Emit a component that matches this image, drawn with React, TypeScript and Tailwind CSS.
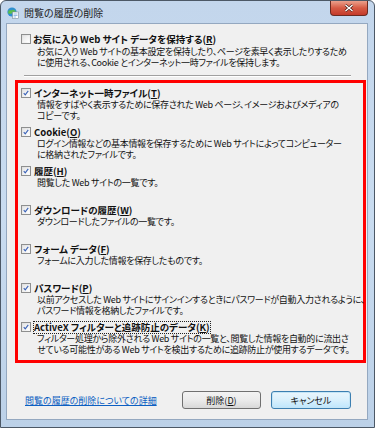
import React from 'react';

const items = [
  { label: 'インターネット一時ファイル', key: 'T', lines: ['情報をすばやく表示するために保存された Web ページ、イメージおよびメディアの', 'コピーです。'] },
  { label: 'Cookie', key: 'O', lines: ['ログイン情報などの基本情報を保存するために Web サイトによってコンピューター', 'に格納されたファイルです。'] },
  { label: '履歴', key: 'H', lines: ['閲覧した Web サイトの一覧です。'] },
  { label: 'ダウンロードの履歴', key: 'W', lines: ['ダウンロードしたファイルの一覧です。'] },
  { label: 'フォーム データ', key: 'F', lines: ['フォームに入力した情報を保存したものです。'] },
  { label: 'パスワード', key: 'P', lines: ['以前アクセスした Web サイトにサインインするときにパスワードが自動入力されるように、', 'パスワード情報を格納したファイルです。'] },
  { label: 'ActiveX フィルターと追跡防止のデータ', key: 'K', lines: ['フィルター処理から除外される Web サイトの一覧と、閲覧した情報を自動的に流出さ', 'せている可能性がある Web サイトを検出するために追跡防止が使用するデータです。'], focus: true },
];

function Checkbox({ checked }: { checked: boolean }) {
  return (
    <div className="w-[10px] h-[10px] shrink-0 border border-[#8e8f8f] bg-gradient-to-br from-[#dedede] to-[#fbfbfb] p-px">
      <div className="w-full h-full bg-gradient-to-br from-[#e6e6e6] to-[#ffffff] flex items-center justify-center">
        {checked && (
          <svg viewBox="0 0 8 8" className="w-[8px] h-[8px]">
            <path d="M1 4.2 L3 6.4 L7 1.2" fill="none" stroke="#3a62b8" strokeWidth="1.5" />
          </svg>
        )}
      </div>
    </div>
  );
}

function TitleIcon() {
  return (
    <svg viewBox="0 0 12 12" className="w-[12px] h-[12px]">
      <circle cx="5" cy="5" r="4.6" fill="#2f8fd0" />
      <path d="M1.5 3.5 C3 2.5 4 4 5.5 3 C6.5 2.3 7 3.5 8.5 3.6 L8.5 6 C7 6.4 6 5 4.6 6.4 C3.6 7.4 2.4 6.2 1 6.6 Z" fill="#5bbf4a" />
      <rect x="5.5" y="5" width="6" height="6.5" fill="#ffffff" stroke="#7a8a9a" strokeWidth="0.6" />
      <path d="M6.5 7 H10.5 M6.5 8.5 H10.5 M6.5 10 H9" stroke="#6ea0d8" strokeWidth="0.7" />
    </svg>
  );
}

export default function App() {
  return (
    <div className="w-[375px] h-[428px] overflow-hidden flex flex-col border border-[#4c5866] rounded-t-[6px] bg-gradient-to-b from-[#c3d6ec] via-[#c9dcf0] to-[#bcd1e8] text-[#111] [font-family:'Noto_Sans_CJK_JP','Noto_Sans',sans-serif] [font-feature-settings:'palt']">
      {/* Title bar */}
      <div className="h-[22px] flex items-start shrink-0">
        <div className="pl-[6px] pt-[6px]">
          <TitleIcon />
        </div>
        <div className="ml-[5px] mt-[6px] text-[10px] leading-[12px] text-[#1b1b1b]">閲覧の履歴の削除</div>
        <div className="ml-auto mr-[6px] w-[38px] h-[15px] rounded-b-[4px] border border-t-0 border-[#6b2a20] bg-gradient-to-b from-[#eaa08c] via-[#d65a44] to-[#c43a2a] flex items-center justify-center">
          <svg viewBox="0 0 10 8" className="w-[10px] h-[8px]">
            <path d="M1.5 1 L8.5 7 M8.5 1 L1.5 7" stroke="#3a1510" strokeWidth="2.6" />
            <path d="M1.5 1 L8.5 7 M8.5 1 L1.5 7" stroke="#ffffff" strokeWidth="1.5" />
          </svg>
        </div>
      </div>

      {/* Panel */}
      <div className="ml-[5px] mr-[6px] h-[397px] shrink-0 border border-[#94a8c0] bg-[#f0f0f0] flex flex-col">
        <div className="pt-[9px] pl-[14px]">
          <div className="flex items-center gap-[2px] h-[12px]">
            <Checkbox checked={false} />
            <span className="text-[9.5px] leading-[12px] font-bold">お気に入り Web サイト データを保持する(<u>R</u>)</span>
          </div>
          <div className="mt-[1px] ml-[16px] text-[9px] leading-[11px] tracking-[-0.3px]">
            <div className="whitespace-nowrap">お気に入り Web サイトの基本設定を保持したり、ページを素早く表示したりするため</div>
            <div className="whitespace-nowrap">に使用される、Cookie とインターネット一時ファイルを保持します。</div>
          </div>
        </div>

        <div className="mt-[7px] ml-[17px] mr-[16px] border-t border-[#a0a0a0] border-b border-b-white" />

        <div className="mt-[3px] ml-[8px] mr-[1px] border-[3px] border-[#ff0000] pt-[4px] pl-[3px]">
          {items.map((it) => (
            <div key={it.key} className="h-[39px]">
              <div className="flex items-center gap-[2px] h-[12px]">
                <Checkbox checked />
                <span className={`text-[9.5px] leading-[11px] font-bold ${it.focus ? 'border border-dotted border-[#222]' : 'border border-transparent'}`}>
                  {it.label}(<u>{it.key}</u>)
                </span>
              </div>
              <div className="ml-[16px] text-[9px] leading-[11px] tracking-[-0.3px]">
                {it.lines.map((l) => (
                  <div key={l} className="whitespace-nowrap">{l}</div>
                ))}
              </div>
            </div>
          ))}
        </div>

        <div className="mt-[28px] flex items-center pl-[18px] pr-[16px]">
          <span className="text-[9px] leading-[11px] text-[#0c5fc2] underline">閲覧の履歴の削除についての詳細</span>
          <button className="ml-auto w-[79px] h-[18px] rounded-[3px] border border-[#707070] bg-gradient-to-b from-[#f3f3f3] via-[#ebebeb] to-[#d8d8d8] text-[9px] leading-[11px] flex items-center justify-center">
            削除(<u>D</u>)
          </button>
          <button className="ml-[10px] w-[80px] h-[18px] rounded-[3px] border border-[#3c7fb1] bg-gradient-to-b from-[#eaf6fd] via-[#d9f0fc] to-[#bee6fd] text-[9px] leading-[11px] flex items-center justify-center shadow-[inset_0_0_0_1px_#c4e5f6]">
            キャンセル
          </button>
        </div>
      </div>
    </div>
  );
}
